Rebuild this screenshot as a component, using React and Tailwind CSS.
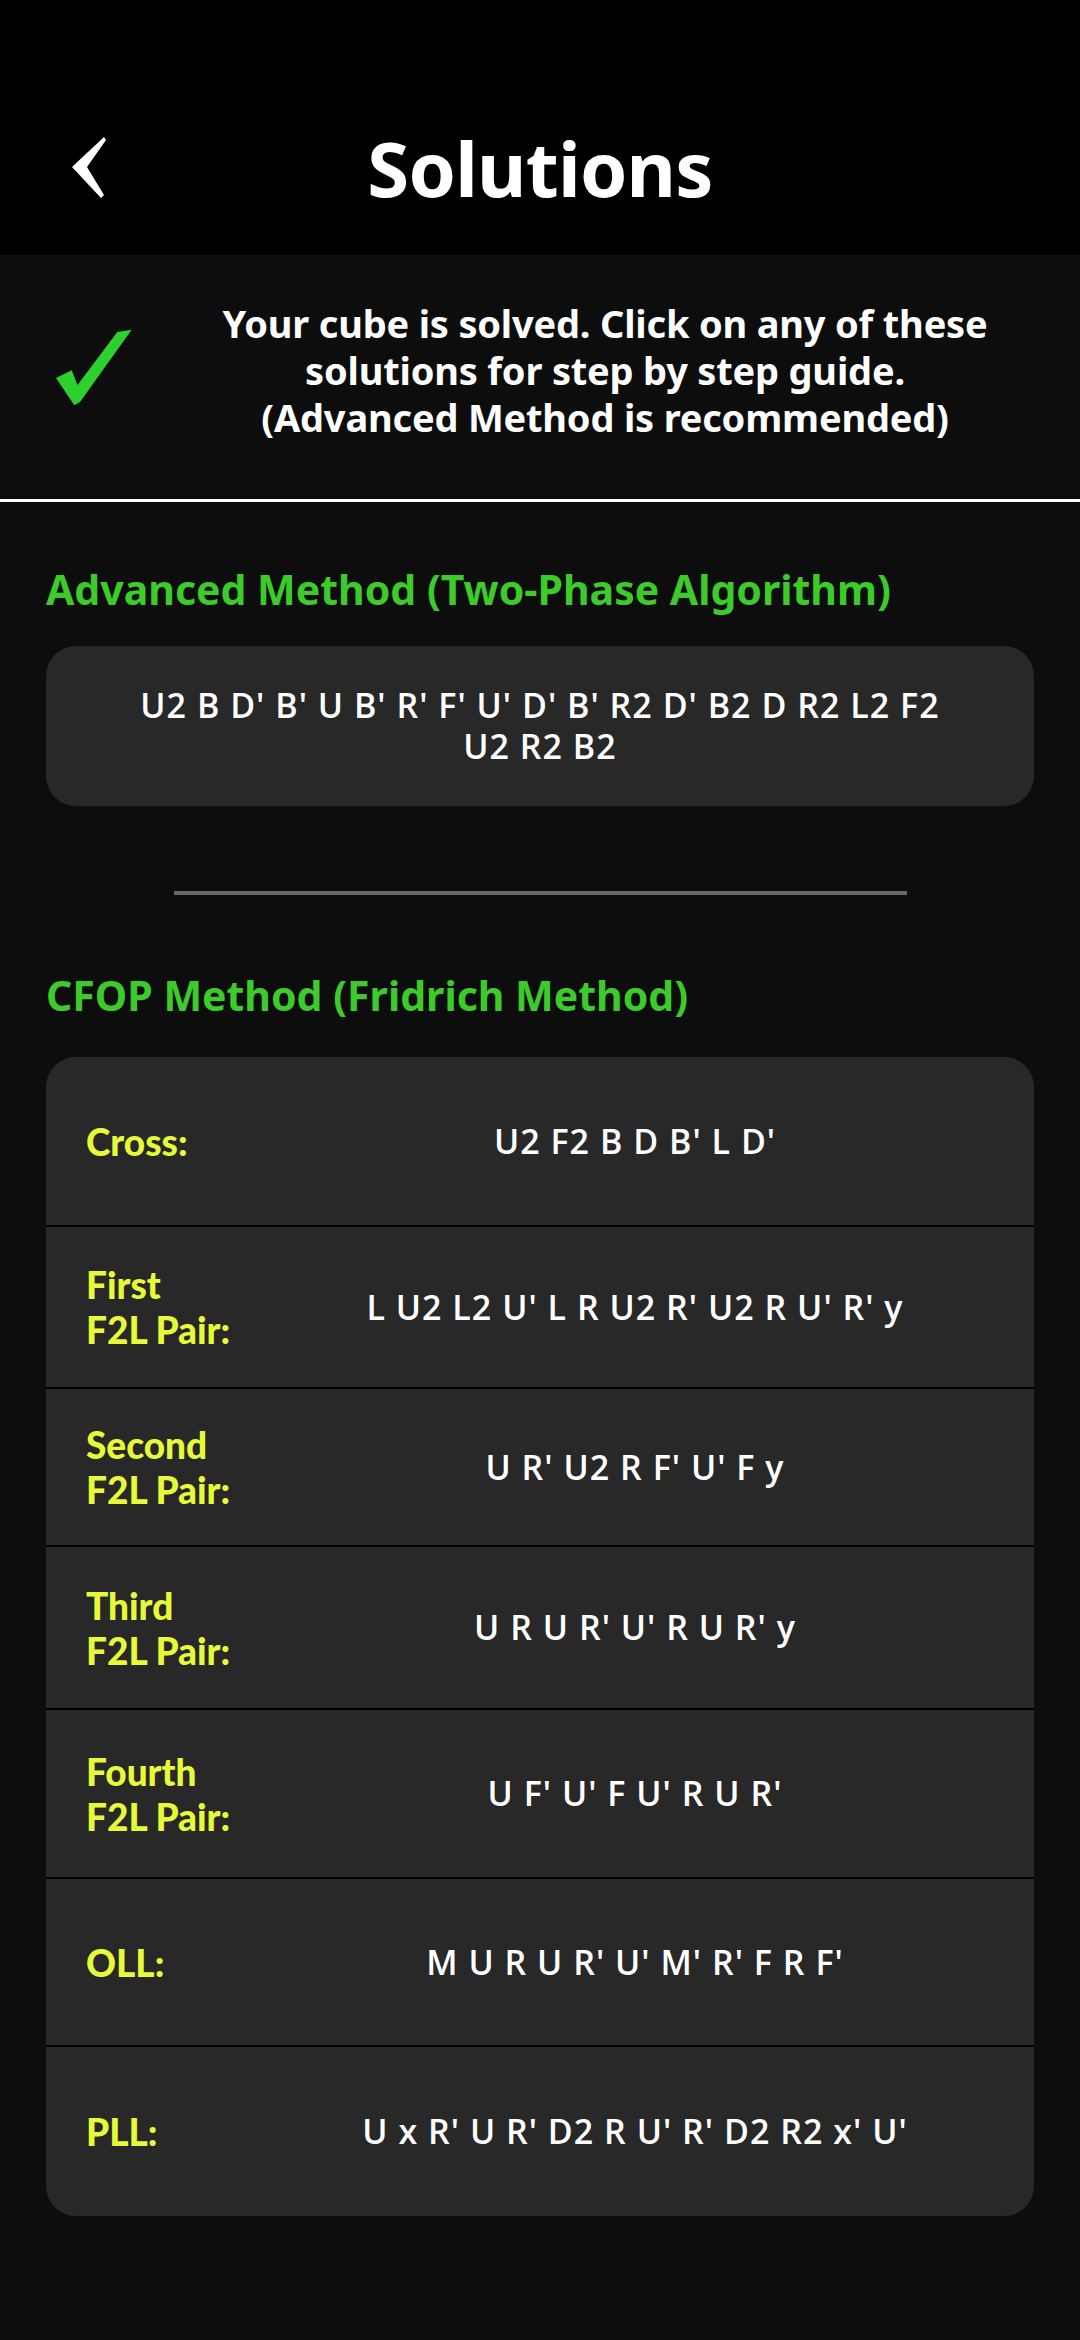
import React from 'react';

const steps = [
    { label: ['Cross:'], moves: "U2 F2 B D B' L D'", h: 'h-[168px]' },
    { label: ['First', 'F2L Pair:'], moves: "L U2 L2 U' L R U2 R' U2 R U' R' y", h: 'h-[162px]' },
    { label: ['Second', 'F2L Pair:'], moves: "U R' U2 R F' U' F y", h: 'h-[158px]' },
    { label: ['Third', 'F2L Pair:'], moves: "U R U R' U' R U R' y", h: 'h-[163px]' },
    { label: ['Fourth', 'F2L Pair:'], moves: "U F' U' F U' R U R'", h: 'h-[169px]' },
    { label: ['OLL:'], moves: "M U R U R' U' M' R' F R F'", h: 'h-[168px]' },
    { label: ['PLL:'], moves: "U x R' U R' D2 R U' R' D2 R2 x' U'", h: 'h-[171px]' },
];

const round = { fontFamily: '"Noto Sans", "Open Sans", sans-serif' };
const moveFont = { fontFamily: '"Open Sans", "Noto Sans", sans-serif' };
const labelFont = { fontFamily: 'Lato, "Noto Sans", sans-serif' };

const App = () => {
    return (
        <div className="min-h-[2340px] w-[1080px] bg-[#0d0d0d]" style={round}>
            {/* header */}
            <div className="bg-black pt-[80px] h-[255px] grid grid-cols-[1fr_auto_1fr] items-center">
                <div className="flex items-center pl-[60px] h-[175px]">
                    <svg width="60" height="80" viewBox="0 0 60 80">
                        <polygon points="44,9 12,39 41,70 44,67 27,39 46,12" fill="#fff" />
                    </svg>
                </div>
                <h1 className="text-white font-bold text-[76px] leading-[175px] tracking-[-0.01em]">Solutions</h1>
                <div></div>
            </div>

            {/* solved notice */}
            <div className="h-[247px] flex items-center pl-[40px] pr-[30px] pb-[14px] border-b-[3px] border-white">
                <svg width="120" height="100" viewBox="0 0 120 100" className="shrink-0 mt-[-4px]">
                    <polygon points="16,60 31.7,52.3 37.5,67 77.3,14 91.7,11.7 40,84 34.3,87.3" fill="#2dd12d" />
                </svg>
                <p className="flex-1 text-center text-white font-bold text-[38px] leading-[47px] tracking-[-0.005em]">
                    Your cube is solved. Click on any of these<br />
                    solutions for step by step guide.<br />
                    (Advanced Method is recommended)
                </p>
            </div>

            <div className="px-[46px] pb-[120px]">
                <h2 className="pt-[62px] text-[#3ccb2a] font-bold text-[41px] leading-[50px]">Advanced Method (Two-Phase Algorithm)</h2>
                <div className="mt-[32px] h-[160px] rounded-[30px] bg-[#282828] px-[70px] flex items-center justify-center">
                    <p className="text-center text-white font-semibold text-[34px] leading-[41px] tracking-[0.03em]" style={moveFont}>
                        U2 B D' B' U B' R' F' U' D' B' R2 D' B2 D R2 L2 F2 U2 R2 B2
                    </p>
                </div>

                <div className="mt-[85px] mx-auto w-[733px] h-[4px] bg-[#666666]"></div>

                <h2 className="mt-[75px] text-[#3ccb2a] font-bold text-[41px] leading-[50px]">CFOP Method (Fridrich Method)</h2>
                <div className="mt-[37px] rounded-[30px] bg-[#282828] overflow-hidden">
                    {steps.map((s, i) => (
                        <div key={i} className={`${s.h} flex items-center pl-[40px] pr-[40px] ${i > 0 ? 'border-t-2 border-black' : ''}`}>
                            <p className="w-[190px] shrink-0 text-[#e6fa3a] font-black text-[37px] leading-[45px]" style={labelFont}>
                                {s.label.length > 1 ? <>{s.label[0]}<br />{s.label[1]}</> : s.label[0]}
                            </p>
                            <div className="flex-1 text-center text-white font-semibold text-[34px] tracking-[0.03em]" style={moveFont}>
                                {s.moves}
                            </div>
                        </div>
                    ))}
                </div>
            </div>
        </div>
    );
};

export default App;
